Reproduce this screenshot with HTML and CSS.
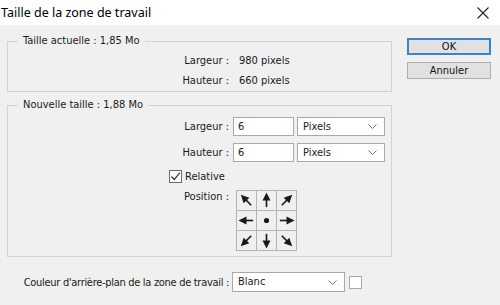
FILE: index.html
```html
<!DOCTYPE html>
<html lang="fr">
<head>
<meta charset="utf-8">
<title>Taille de la zone de travail</title>
<link rel="stylesheet" href="styles.css">
</head>
<body>
<div class="window">
  <div class="titlebar">
    <span class="title">Taille de la zone de travail</span>
    <svg class="close" width="12" height="12" viewBox="0 0 12 12"><path d="M0.5 0.5 L11.5 11.5 M11.5 0.5 L0.5 11.5" stroke="#222" stroke-width="1.1" fill="none"/></svg>
  </div>
  <div class="content">
    <div class="main">
      <fieldset class="group group-current">
        <legend>Taille actuelle : 1,85 Mo</legend>
        <div class="rows">
          <span class="lbl">Largeur :</span><span class="val">980 pixels</span>
          <span class="lbl">Hauteur :</span><span class="val">660 pixels</span>
        </div>
      </fieldset>
      <fieldset class="group group-new">
        <legend>Nouvelle taille : 1,88 Mo</legend>
        <div class="form">
          <span class="lbl">Largeur :</span>
          <span class="input">6</span>
          <span class="select">Pixels<svg class="chev" width="9" height="5" viewBox="0 0 9 5"><path d="M0.5 0.5 L4.5 4.5 L8.5 0.5" stroke="#777" fill="none"/></svg></span>
          <span class="lbl">Hauteur :</span>
          <span class="input">6</span>
          <span class="select">Pixels<svg class="chev" width="9" height="5" viewBox="0 0 9 5"><path d="M0.5 0.5 L4.5 4.5 L8.5 0.5" stroke="#777" fill="none"/></svg></span>
          <div class="check-row">
            <span class="checkbox"><svg width="11" height="11" viewBox="0 0 11 11"><path d="M1.5 5.5 L4.2 8.5 L9.8 1.8" stroke="#333" stroke-width="1.2" fill="none"/></svg></span>
            <span>Relative</span>
          </div>
          <span class="lbl lbl-top">Position :</span>
          <div class="anchor">
            <span class="cell"><svg viewBox="0 0 20 20"><g transform="rotate(-135 10 10)"><path d="M3 10 H12" stroke="#1a1a1a" stroke-width="1.7"/><path d="M18.5 10 L10 5.8 L10 14.2 Z" fill="#1a1a1a"/></g></svg></span>
            <span class="cell"><svg viewBox="0 0 20 20"><g transform="rotate(-90 10 10)"><path d="M3 10 H12" stroke="#1a1a1a" stroke-width="1.7"/><path d="M18.5 10 L10 5.8 L10 14.2 Z" fill="#1a1a1a"/></g></svg></span>
            <span class="cell"><svg viewBox="0 0 20 20"><g transform="rotate(-45 10 10)"><path d="M3 10 H12" stroke="#1a1a1a" stroke-width="1.7"/><path d="M18.5 10 L10 5.8 L10 14.2 Z" fill="#1a1a1a"/></g></svg></span>
            <span class="cell"><svg viewBox="0 0 20 20"><g transform="rotate(180 10 10)"><path d="M3 10 H12" stroke="#1a1a1a" stroke-width="1.7"/><path d="M18.5 10 L10 5.8 L10 14.2 Z" fill="#1a1a1a"/></g></svg></span>
            <span class="cell"><svg viewBox="0 0 20 20"><circle cx="10" cy="10" r="2.7" fill="#1a1a1a"/></svg></span>
            <span class="cell"><svg viewBox="0 0 20 20"><g><path d="M3 10 H12" stroke="#1a1a1a" stroke-width="1.7"/><path d="M18.5 10 L10 5.8 L10 14.2 Z" fill="#1a1a1a"/></g></svg></span>
            <span class="cell"><svg viewBox="0 0 20 20"><g transform="rotate(135 10 10)"><path d="M3 10 H12" stroke="#1a1a1a" stroke-width="1.7"/><path d="M18.5 10 L10 5.8 L10 14.2 Z" fill="#1a1a1a"/></g></svg></span>
            <span class="cell"><svg viewBox="0 0 20 20"><g transform="rotate(90 10 10)"><path d="M3 10 H12" stroke="#1a1a1a" stroke-width="1.7"/><path d="M18.5 10 L10 5.8 L10 14.2 Z" fill="#1a1a1a"/></g></svg></span>
            <span class="cell"><svg viewBox="0 0 20 20"><g transform="rotate(45 10 10)"><path d="M3 10 H12" stroke="#1a1a1a" stroke-width="1.7"/><path d="M18.5 10 L10 5.8 L10 14.2 Z" fill="#1a1a1a"/></g></svg></span>
          </div>
        </div>
      </fieldset>
      <div class="bg-row">
        <span class="lbl lbl-long">Couleur d'arrière-plan de la zone de travail :</span>
        <span class="select select-wide">Blanc<svg class="chev" width="9" height="5" viewBox="0 0 9 5"><path d="M0.5 0.5 L4.5 4.5 L8.5 0.5" stroke="#777" fill="none"/></svg></span>
        <span class="swatch"></span>
      </div>
    </div>
    <div class="buttons">
      <button class="btn btn-default">OK</button>
      <button class="btn">Annuler</button>
    </div>
  </div>
</div>
</body>
</html>
```
FILE: styles.css
```css
* { box-sizing: border-box; }
html, body { margin: 0; padding: 0; }
body {
  width: 500px;
  height: 305px;
  overflow: hidden;
  font-family: "DejaVu Sans Condensed", "DejaVu Sans", sans-serif;
  font-size: 11px;
  color: #1a1a1a;
  background: #f0f0f0;
}
.window { width: 500px; height: 305px; display: flex; flex-direction: column; }
.titlebar {
  height: 25px;
  background: #fff;
  display: flex;
  align-items: center;
  justify-content: space-between;
  padding: 0 11px 0 1px;
}
.title {
  font-family: "Noto Sans", sans-serif;
  font-size: 12.5px;
  color: #000;
}
.close { display: block; }
.content {
  flex: 1;
  display: flex;
  padding: 9px 0 0 7px;
  gap: 15px;
}
.main { width: 385px; display: flex; flex-direction: column; }
.group {
  margin: 0;
  border: 1px solid #d3d3d3;
  padding: 0;
  min-width: 0;
}
.group legend {
  margin-left: 10px;
  padding: 0 5px;
  line-height: 14px;
  height: 14px;
}
.group-current .rows {
  display: grid;
  grid-template-columns: 221px 1fr;
  grid-auto-rows: 20px;
  align-items: center;
  padding: 2px 0 1px;
}
.lbl { text-align: right; white-space: nowrap; }
.lbl-long { letter-spacing: -0.3px; }
.val { padding-left: 10px; }
.group-new { margin-top: 6px; }
.form {
  display: grid;
  grid-template-columns: 221px 65px 92px;
  grid-template-rows: 19px 19px 14px 61px;
  row-gap: 7px;
  align-items: center;
  padding: 5px 0 5px;
}
.form .check-row { grid-column: 1 / -1; }
.input {
  margin-left: 4px;
  width: 61px;
  height: 19px;
  background: #fff;
  border: 1px solid #a9a9a9;
  padding-left: 4px;
  line-height: 17px;
}
.select {
  margin-left: 3px;
  width: 88px;
  height: 19px;
  background: #fff;
  border: 1px solid #a9a9a9;
  padding: 0 7px 0 5px;
  line-height: 17px;
  display: flex;
  align-items: center;
  justify-content: space-between;
}
.chev { display: block; }
.check-row {
  display: flex;
  align-items: center;
  gap: 3px;
  padding-left: 161px;
  height: 14px;
}
.checkbox {
  width: 13px;
  height: 13px;
  background: #fff;
  border: 1px solid #6a6a6a;
  display: flex;
  align-items: center;
  justify-content: center;
}
.checkbox svg { display: block; }
.lbl-top { align-self: start; line-height: 14px; }
.anchor {
  grid-column: 2 / -1;
  margin-left: 7px;
  width: 61px;
  height: 61px;
  display: grid;
  grid-template-columns: repeat(3, 20px);
  grid-template-rows: repeat(3, 20px);
  border-top: 1px solid #b4b4b4;
  border-left: 1px solid #b4b4b4;
  align-self: start;
}
.cell {
  width: 20px;
  height: 20px;
  border-right: 1px solid #b4b4b4;
  border-bottom: 1px solid #b4b4b4;
  background: #f0f0f0;
}
.cell svg { display: block; width: 19px; height: 19px; }
.bg-row {
  margin-top: 15px;
  display: grid;
  grid-template-columns: 222px auto auto;
  align-items: center;
  justify-content: start;
}
.select-wide { width: 113px; height: 20px; line-height: 18px; margin-left: 3px; }
.swatch {
  margin-left: 4px;
  width: 13px;
  height: 13px;
  background: #fff;
  border: 1px solid #a9a9a9;
}
.buttons {
  display: flex;
  flex-direction: column;
  gap: 7px;
  padding-top: 4px;
}
.btn {
  width: 84px;
  height: 17px;
  padding: 0;
  margin: 0;
  font: inherit;
  color: #111;
  background: #e1e1e1;
  border: 1px solid #adadad;
  line-height: 15px;
}
.btn-default { border: 2px solid #3a84c8; line-height: 13px; }
```
